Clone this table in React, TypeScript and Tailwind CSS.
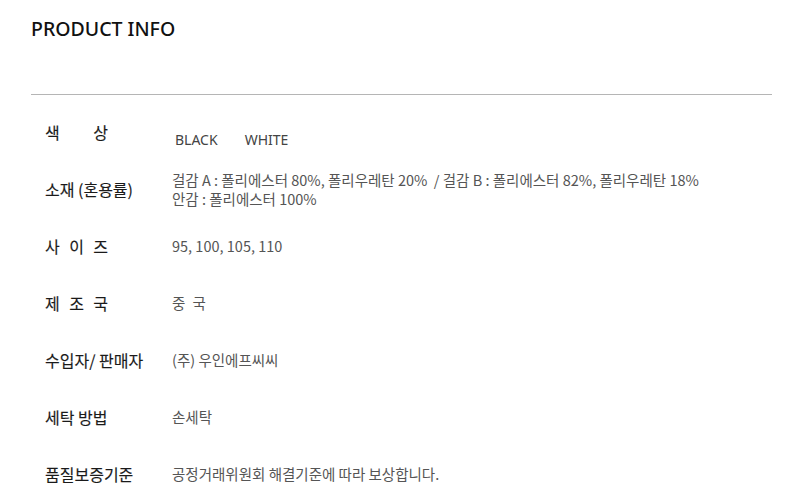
import React from "react";

const KR = "font-['Noto_Sans_CJK_KR','Noto_Sans',sans-serif]";

function Spread({ chars }: { chars: string[] }) {
  return (
    <div className="flex w-[63px] justify-between">
      {chars.map((c) => (
        <span key={c}>{c}</span>
      ))}
    </div>
  );
}

function Row({ label, children }: { label: React.ReactNode; children: React.ReactNode }) {
  return (
    <div className="flex h-[57px] items-center">
      <div className="w-[141px] pl-[14px] text-[16px] font-normal text-[#1a1a1a] [-webkit-text-stroke:0.15px_#1a1a1a]">
        {label}
      </div>
      <div className="flex-1 text-[14.5px] leading-[19px] text-[#555]">{children}</div>
    </div>
  );
}

export default function App() {
  return (
    <main className={`min-h-screen w-[800px] bg-white ${KR}`}>
      <div className="px-[31px] pt-[15px]">
        <h1 className="text-[19.5px] font-medium leading-[28px] text-[#111] font-['Noto_Sans',sans-serif]">
          PRODUCT INFO
        </h1>
        <div className="mt-[51px] h-px w-[741px] bg-[#b5b5b5]" />
        <div className="pt-[8px]">
          <Row label={<Spread chars={["색", "상"]} />}>
            <div className="flex gap-[27px] pl-[3px] pt-[16px] text-[14px] text-[#444] font-['Noto_Sans',sans-serif]">
              <span>BLACK</span>
              <span>WHITE</span>
            </div>
          </Row>
          <Row label="소재 (혼용률)">
            <div>걸감 A : 폴리에스터 80%, 폴리우레탄 20% &nbsp;/ 걸감 B : 폴리에스터 82%, 폴리우레탄 18%</div>
            <div>안감 : 폴리에스터 100%</div>
          </Row>
          <Row label={<Spread chars={["사", "이", "즈"]} />}>95, 100, 105, 110</Row>
          <Row label={<Spread chars={["제", "조", "국"]} />}>
            <span className="tracking-[2px]">중 국</span>
          </Row>
          <Row label="수입자/ 판매자">(주) 우인에프씨씨</Row>
          <Row label="세탁 방법">손세탁</Row>
          <Row label="품질보증기준">공정거래위원회 해결기준에 따라 보상합니다.</Row>
        </div>
      </div>
    </main>
  );
}
